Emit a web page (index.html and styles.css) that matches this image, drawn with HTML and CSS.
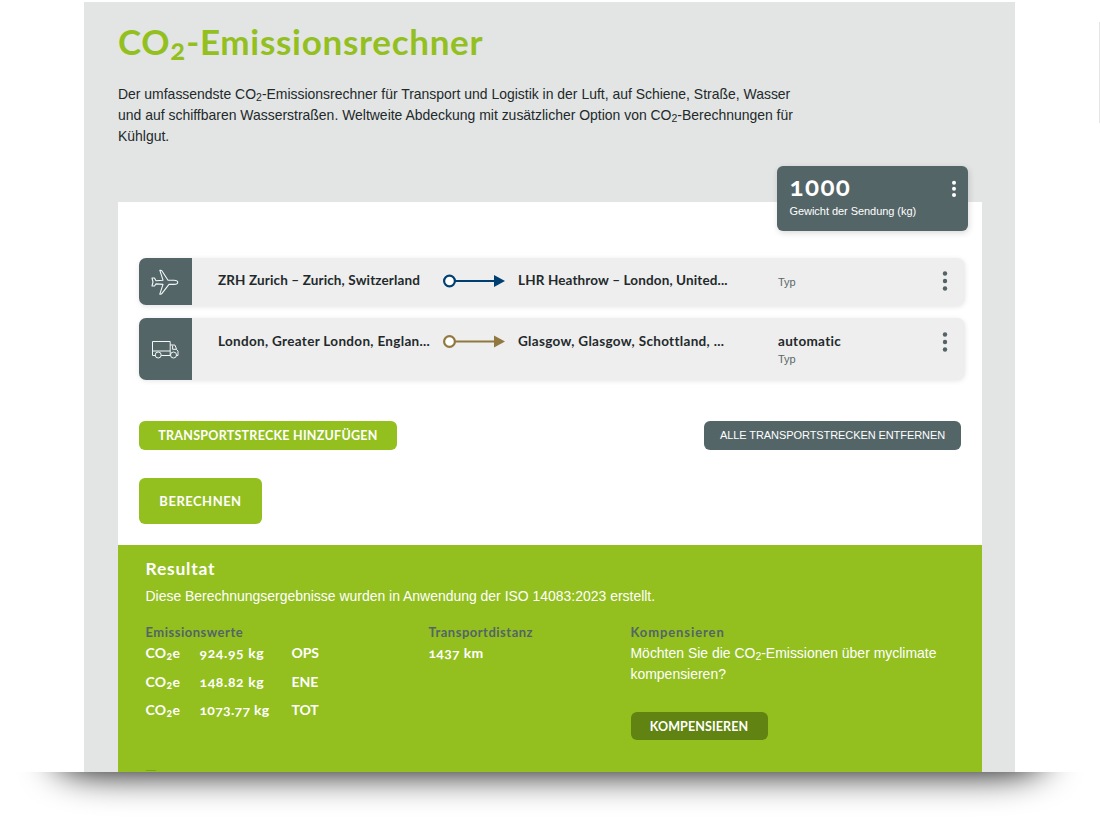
FILE: index.html
```
<!DOCTYPE html>
<html lang="de">
<head>
<meta charset="utf-8">
<title>CO2-Emissionsrechner</title>
<link rel="stylesheet" href="styles.css">
</head>
<body>
<main class="page">
  <header class="intro">
    <h1 class="title"><span>CO<sub>2</sub>-Emissionsrechner</span></h1>
    <p class="lead">Der umfassendste CO<sub>2</sub>-Emissionsrechner für Transport und Logistik in der Luft, auf Schiene, Straße, Wasser<br>und auf schiffbaren Wasserstraßen. Weltweite Abdeckung mit zusätzlicher Option von CO<sub>2</sub>-Berechnungen für<br>Kühlgut.</p>
  </header>
  <section class="calculator">
    <div class="weight">
      <div>
        <div class="weight-value">1000</div>
        <div class="weight-label">Gewicht der Sendung (kg)</div>
      </div>
      <svg class="weight-menu" width="6" height="18" viewBox="0 0 6 18" fill="#fff"><circle cx="3" cy="2.7" r="2"/><circle cx="3" cy="8.8" r="2"/><circle cx="3" cy="14.9" r="2"/></svg>
    </div>
    <div class="leg leg-air">
      <div class="mode">
        <svg width="28" height="28" viewBox="0 0 28 28" fill="none" stroke="#f1f8f8" stroke-width="1.1" stroke-linejoin="round"><path d="M17 12.2 11 3Q10.5 2.2 9.5 2.2H8.8L12 12.2 5 12.7 3.5 10H1L2 14 1 18H3.5L5 15.9 12 16.4 8.8 26.2H9.5Q10.5 26.2 11 25.4L18 16.4H23C28 16.4 28 12.2 23 12.2Z"/></svg>
      </div>
      <div class="place from tight">ZRH Zurich – Zurich, Switzerland</div>
      <svg class="route blue" width="62" height="14" viewBox="0 0 62 14"><circle cx="6.5" cy="7" r="5.4" fill="#fff" stroke="currentColor" stroke-width="2.2"/><path d="M12 7H54" stroke="currentColor" stroke-width="2"/><path d="M51 1 62 7 51 13Z" fill="currentColor"/></svg>
      <div class="place tight">LHR Heathrow – London, United...</div>
      <div class="type"><div class="type-label solo">Typ</div></div>
      <svg class="leg-menu" width="6" height="20" viewBox="0 0 6 20" fill="#536466"><circle cx="3" cy="2.5" r="2.2"/><circle cx="3" cy="10" r="2.2"/><circle cx="3" cy="17.5" r="2.2"/></svg>
    </div>
    <div class="leg leg-road">
      <div class="mode">
        <svg width="28" height="20" viewBox="0 0 28 20" fill="none" stroke="#f1f8f8" stroke-width="1"><path d="M4 16.5H1.5V2.5H19.2V16.5M10.3 16.5H19.2M1.5 12H19.2M19.2 6H23.8Q25 8 25.5 10.4L27 12.2V16.5H25.8M21.6 6.5V10.3H25.4"/><circle cx="7.2" cy="16" r="3"/><circle cx="22.5" cy="16" r="3"/></svg>
      </div>
      <div class="place from">London, Greater London, Englan...</div>
      <svg class="route gold" width="62" height="14" viewBox="0 0 62 14"><circle cx="6.5" cy="7.5" r="5.4" fill="#fff" stroke="currentColor" stroke-width="2.2"/><path d="M12 7.5H54" stroke="currentColor" stroke-width="2"/><path d="M51 1.5 62 7.5 51 13.5Z" fill="currentColor"/></svg>
      <div class="place">Glasgow, Glasgow, Schottland, ...</div>
      <div class="type"><div class="type-name">automatic</div><div class="type-label">Typ</div></div>
      <svg class="leg-menu" width="6" height="20" viewBox="0 0 6 20" fill="#536466"><circle cx="3" cy="2.5" r="2.2"/><circle cx="3" cy="10" r="2.2"/><circle cx="3" cy="17.5" r="2.2"/></svg>
    </div>
    <div class="actions">
      <button class="btn add">TRANSPORTSTRECKE HINZUFÜGEN</button>
      <button class="btn remove">ALLE TRANSPORTSTRECKEN ENTFERNEN</button>
    </div>
    <button class="btn calc">BERECHNEN</button>
  </section>
  <section class="result">
    <h2 class="result-title">Resultat</h2>
    <p class="result-note">Diese Berechnungsergebnisse wurden in Anwendung der ISO 14083:2023 erstellt.</p>
    <div class="columns">
      <div>
        <h3 class="label">Emissionswerte</h3>
        <div class="values">
          <span>CO<sub>2</sub>e</span><span class="wide">924.95 kg</span><span class="scope">OPS</span>
          <span>CO<sub>2</sub>e</span><span class="wide">148.82 kg</span><span class="scope">ENE</span>
          <span>CO<sub>2</sub>e</span><span>1073.77 kg</span><span class="scope">TOT</span>
        </div>
      </div>
      <div>
        <h3 class="label">Transportdistanz</h3>
        <div class="values"><span>1437 km</span></div>
      </div>
      <div>
        <h3 class="label label-wide">Kompensieren</h3>
        <p class="question">Möchten Sie die CO<sub>2</sub>-Emissionen über myclimate<br>kompensieren?</p>
        <button class="btn compensate">KOMPENSIEREN</button>
      </div>
    </div>
    <div class="cut-line"></div>
  </section>
</main>
<div class="shadow-clip"><div class="shadow-source"></div></div>
<div class="edge"></div>
</body>
</html>
```
FILE: styles.css
```
* { box-sizing: border-box; }
body {
  margin: 0;
  width: 1100px;
  height: 825px;
  overflow: hidden;
  position: relative;
  background: #fff;
  color: #23292b;
  font-family: "Liberation Sans", Arial, sans-serif;
}
h1, h2, h3, p { margin: 0; }
sub { line-height: 0; font-size: 75%; vertical-align: -0.22em; }

.page {
  width: 931px;
  height: 770px;
  margin: 2px 0 0 84px;
  padding: 0 33px 0 34px;
  overflow: hidden;
  background: #e2e5e4;
}
.intro { height: 200px; padding-top: 16px; }
.title {
  height: 46px;
  font: 700 35px/46px Lato, sans-serif;
  font-variant-numeric: oldstyle-nums;
  letter-spacing: .7px;
  white-space: nowrap;
  color: #93c01f;
}
.title sub { font-size: 80%; vertical-align: -0.18em; }
.lead {
  padding-top: 19.5px;
  font-size: 13.96px;
  line-height: 21px;
  white-space: nowrap;
}

.calculator {
  position: relative;
  height: 343px;
  padding: 56px 17px 0 21px;
  background: #fff;
}
.weight {
  position: absolute;
  top: -36px;
  right: 14px;
  width: 191px;
  height: 65px;
  padding: 11px 11px 0 12.5px;
  display: flex;
  justify-content: space-between;
  border-radius: 6px;
  background: #546567;
  color: #fff;
  box-shadow: 1px 2px 6px rgba(0, 0, 0, .15);
}
.weight-value {
  font: 700 26px/18px Lato, sans-serif;
  font-variant-numeric: oldstyle-nums;
  letter-spacing: 1.4px;
}
.weight-label { margin-top: 9px; font-size: 11px; line-height: 14px; letter-spacing: -.05px; white-space: nowrap; }
.weight-menu { margin-top: 3px; }

.leg {
  display: grid;
  grid-template-columns: 53px 251px 75px 260px 158px 1fr;
  align-items: start;
  border-radius: 8px;
  background: #eee;
  box-shadow: 0 1px 5px rgba(0, 0, 0, .1);
}
.leg-air { height: 48px; }
.leg-road { height: 62px; margin-top: 12px; }
.mode {
  height: 100%;
  display: flex;
  align-items: center;
  justify-content: center;
  padding-right: 2px;
  border-radius: 7px 0 0 7px;
  background: #546567;
}
.leg-air .mode { height: 47px; }
.place, .type-name {
  padding-top: 13.5px;
  font: 700 13.5px/19px Lato, sans-serif;
  letter-spacing: .32px;
  white-space: nowrap;
}
.type-name { margin-bottom: -.5px; }
.place.tight { padding-top: 13px; letter-spacing: .13px; }
.from { padding-left: 26px; }
.route { margin-top: 16px; overflow: visible; }
.blue { color: #003f72; }
.gold { color: #90783f; }
.type-label { font-size: 11px; line-height: 18px; color: #59686a; }
.solo { margin-top: 15px; }
.leg-menu { margin: 13px 0 0 6px; }
.leg-road .leg-menu { margin-top: 13.5px; }

.actions { display: flex; justify-content: space-between; margin: 41px 4px 0 0; }
.btn {
  display: block;
  border: 0;
  padding: 0;
  border-radius: 6px;
  background: #93c01f;
  color: #fff;
  font: 700 13px/28px Lato, sans-serif;
  letter-spacing: .5px;
  white-space: nowrap;
}
.add { width: 258px; height: 29px; font-size: 12.5px; letter-spacing: .26px; }
.remove {
  width: 257px;
  height: 29px;
  background: #546567;
  font: 11px/29px "Liberation Sans", Arial, sans-serif;
  letter-spacing: -.08px;
}
.calc { width: 123px; height: 46px; margin-top: 28px; }

.result { height: 227px; padding: 13px 0 0 27.5px; background: #93c01f; color: #fff; }
.result-title { font: 700 17.5px/22px Lato, sans-serif; letter-spacing: .75px; }
.result-note { margin-top: 6px; font-size: 13.96px; line-height: 20px; }
.columns {
  display: grid;
  grid-template-columns: 283px 202px 1fr;
  padding-top: 16px;
}
.label { font: 700 13px/21px Lato, sans-serif; letter-spacing: .5px; color: #546567; }
.label-wide { letter-spacing: .9px; }
.values {
  display: grid;
  grid-template-columns: 54px 92px 1fr;
  margin-top: -1px;
  font: 700 14px/21px Lato, sans-serif;
  font-variant-numeric: oldstyle-nums;
  row-gap: 7.6px;
  letter-spacing: .3px;
  white-space: nowrap;
}
.wide { letter-spacing: .6px; }
.scope { letter-spacing: -.1px; }
.question { font-size: 13.96px; line-height: 21px; white-space: nowrap; }
.compensate { width: 137px; height: 28px; margin-top: 27px; padding-top: 1px; background: #608312; font-size: 12.5px; letter-spacing: .1px; }
.cut-line { width: 10px; height: 1px; margin-top: 30px; background: #7ba51a; }

/* Soft drop shadow below the page, visible only under its lower edge */
.shadow-clip { position: relative; height: 53px; overflow: hidden; }
.shadow-source {
  position: absolute;
  left: 56px;
  right: 56px;
  bottom: 52px;
  height: 200px;
  border-radius: 0 0 60px 60px / 0 0 14px 14px;
  background: #000;
  filter: blur(18px);
}
.edge { position: absolute; right: 0; top: 22px; width: 1px; height: 101px; background: #e4e4e4; }
```
